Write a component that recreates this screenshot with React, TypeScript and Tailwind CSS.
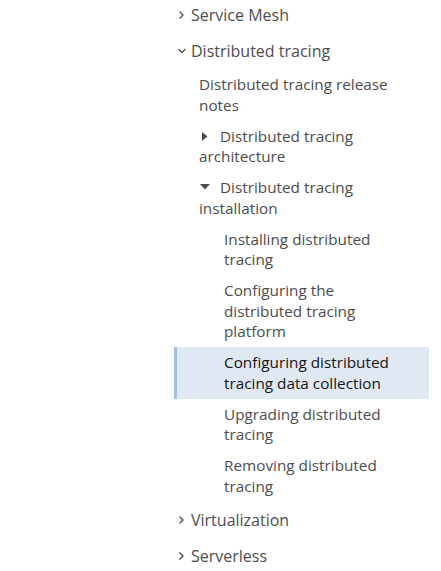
import React from "react";

const ChevRight = () => (
  <svg width="8" height="10" viewBox="0 0 8 10" className="block">
    <polyline points="2.5,1.5 6,5 2.5,8.5" fill="none" stroke="currentColor" strokeWidth="1.3" />
  </svg>
);

const ChevDown = () => (
  <svg width="10" height="8" viewBox="0 0 10 8" className="block">
    <polyline points="1.5,2 5,5.5 8.5,2" fill="none" stroke="currentColor" strokeWidth="1.3" />
  </svg>
);

const CaretRight = () => (
  <svg width="6" height="9" viewBox="0 0 6 9" className="inline-block align-[1px] ml-[3px]">
    <polygon points="0,0 5.5,4.5 0,9" fill="currentColor" />
  </svg>
);

const CaretDown = () => (
  <svg width="10" height="6" viewBox="0 0 10 6" className="inline-block align-[3px] ml-[1px]">
    <polygon points="0,0 10,0 5,5.5" fill="currentColor" />
  </svg>
);

function Top({ label, open }: { label: string; open?: boolean }) {
  return (
    <div className="flex items-center h-[36px] pl-[3px] text-[#4d4d4d]">
      <span className="w-[14px] flex items-center">{open ? <ChevDown /> : <ChevRight />}</span>
      <span className="text-[16px] leading-[24px] whitespace-nowrap">{label}</span>
    </div>
  );
}

function L2({ children }: { children: React.ReactNode }) {
  return (
    <div className="pl-[25px] py-[5.25px] text-[15.3px] leading-[20.5px] text-[#4d4d4d] whitespace-nowrap">
      {children}
    </div>
  );
}

function L3({ children, active }: { children: React.ReactNode; active?: boolean }) {
  return active ? (
    <div className="pl-[47px] py-[5.25px] text-[15.3px] leading-[20.5px] text-[#151515] whitespace-nowrap bg-[#dfe8f3] border-l-[3px] border-[#a6bee0]">
      {children}
    </div>
  ) : (
    <div className="pl-[50px] py-[5.25px] text-[15.3px] leading-[20.5px] text-[#4d4d4d] whitespace-nowrap">
      {children}
    </div>
  );
}

export default function App() {
  return (
    <div
      className="w-[441px] h-[571px] bg-white overflow-hidden"
      style={{ fontFamily: '"Open Sans", "Noto Sans", sans-serif' }}
    >
      <div className="ml-[174px] w-[255px] -mt-[3px]">
        <Top label="Service Mesh" />
        <Top label="Distributed tracing" open />
        <L2>
          Distributed tracing release
          <br />
          notes
        </L2>
        <L2>
          <span className="inline-block w-[21px]">
            <CaretRight />
          </span>
          Distributed tracing
          <br />
          architecture
        </L2>
        <L2>
          <span className="inline-block w-[21px]">
            <CaretDown />
          </span>
          Distributed tracing
          <br />
          installation
        </L2>
        <L3>
          Installing distributed
          <br />
          tracing
        </L3>
        <L3>
          Configuring the
          <br />
          distributed tracing
          <br />
          platform
        </L3>
        <L3 active>
          Configuring distributed
          <br />
          tracing data collection
        </L3>
        <L3>
          Upgrading distributed
          <br />
          tracing
        </L3>
        <L3>
          Removing distributed
          <br />
          tracing
        </L3>
        <Top label="Virtualization" />
        <Top label="Serverless" />
      </div>
    </div>
  );
}
